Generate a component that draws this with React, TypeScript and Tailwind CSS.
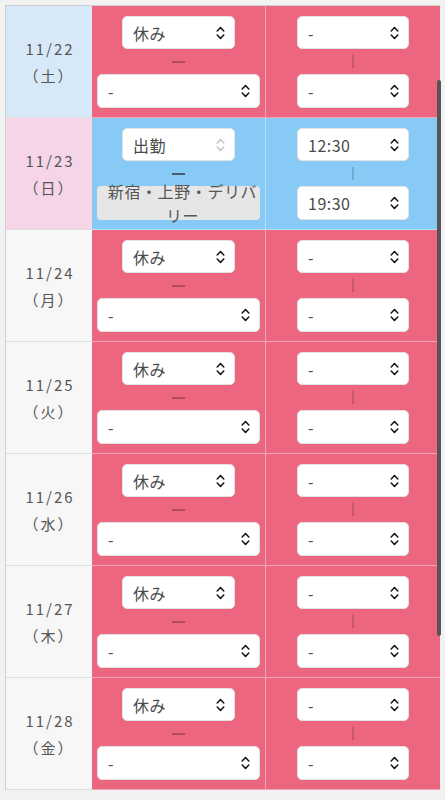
import React from "react";

const font = { fontFamily: '"Noto Sans CJK JP", "Noto Sans", sans-serif' };

function Chevron({ light }: { light?: boolean }) {
  return (
    <svg width="9" height="14" viewBox="0 0 9 14" className="shrink-0">
      <path
        d="M1.2 5 L4.5 1.6 L7.8 5 M1.2 9 L4.5 12.4 L7.8 9"
        fill="none"
        stroke={light ? "#c4c4c4" : "#111"}
        strokeWidth="1.5"
        strokeLinecap="round"
        strokeLinejoin="round"
      />
    </svg>
  );
}

function Sel({ w, h, text, disabled }: { w: string; h: string; text: string; disabled?: boolean }) {
  return (
    <div
      className={`${w} ${h} bg-white rounded-[5px] border border-[#e3e3e3] flex items-center justify-between pl-[10px] pr-[9px] text-[16px] text-[#4a4a4a] tracking-[0.5px]`}
    >
      <span className="leading-none">{text}</span>
      <Chevron light={disabled} />
    </div>
  );
}

type Row = {
  date: string;
  dow: string;
  dateBg: string;
  work?: boolean;
};

const rows: Row[] = [
  { date: "11/22", dow: "（土）", dateBg: "bg-[#d7e9f8]" },
  { date: "11/23", dow: "（日）", dateBg: "bg-[#f6d5e8]", work: true },
  { date: "11/24", dow: "（月）", dateBg: "bg-[#f7f7f7]" },
  { date: "11/25", dow: "（火）", dateBg: "bg-[#f7f7f7]" },
  { date: "11/26", dow: "（水）", dateBg: "bg-[#f7f7f7]" },
  { date: "11/27", dow: "（木）", dateBg: "bg-[#f7f7f7]" },
  { date: "11/28", dow: "（金）", dateBg: "bg-[#f7f7f7]" },
];

function RowView({ r }: { r: Row }) {
  const cellBg = r.work ? "bg-[#88caf6]" : "bg-[#ec6680]";
  return (
    <div className="grid grid-cols-[86px_174px_174px] h-[112px]">
      <div
        className={`${r.dateBg} border-b border-[#dedede] flex flex-col items-center justify-center text-[15px] text-[#555] tracking-[2px] leading-[27px]`}
      >
        <span className="pl-[2px]">{r.date}</span>
        <span>{r.dow}</span>
      </div>
      <div className={`${cellBg} border-b border-r border-white/40 flex flex-col items-center pt-[10px]`}>
        <Sel w="w-[113px]" h="h-[33px]" text={r.work ? "出勤" : "休み"} disabled={r.work} />
        <div className="h-[25px] flex items-center justify-center">
          <div className={`w-[13px] h-[2px] ${r.work ? "bg-[#4a5a66]" : "bg-black/25"}`} />
        </div>
        {r.work ? (
          <div className="w-[163px] h-[34px] bg-[#e6e6e6] rounded-[4px] flex items-center justify-center">
            <div className="text-center text-[16px] text-[#555] tracking-[0.6px] leading-[24px] pl-[10px] pr-[2px]">
              新宿・上野・デリバリー
            </div>
          </div>
        ) : (
          <Sel w="w-[163px]" h="h-[34px]" text="-" />
        )}
      </div>
      <div className={`${cellBg} border-b border-white/40 flex flex-col items-center pt-[10px]`}>
        <Sel w="w-[112px]" h="h-[33px]" text={r.work ? "12:30" : "-"} />
        <div className="h-[25px] flex items-center justify-center">
          <div className="w-[2px] h-[13px] bg-black/15" />
        </div>
        <Sel w="w-[112px]" h="h-[34px]" text={r.work ? "19:30" : "-"} />
      </div>
    </div>
  );
}

export default function App() {
  return (
    <div className="relative min-h-screen bg-[#f2f2f2] pt-[5px] pl-[5px]" style={font}>
      <div className="w-[435px] border-l border-t border-[#cfcfcf]">
        {rows.map((r) => (
          <RowView key={r.date} r={r} />
        ))}
      </div>
      <div className="absolute left-[437px] top-[80px] w-[4px] h-[556px] rounded-full bg-[#555]" />
    </div>
  );
}
